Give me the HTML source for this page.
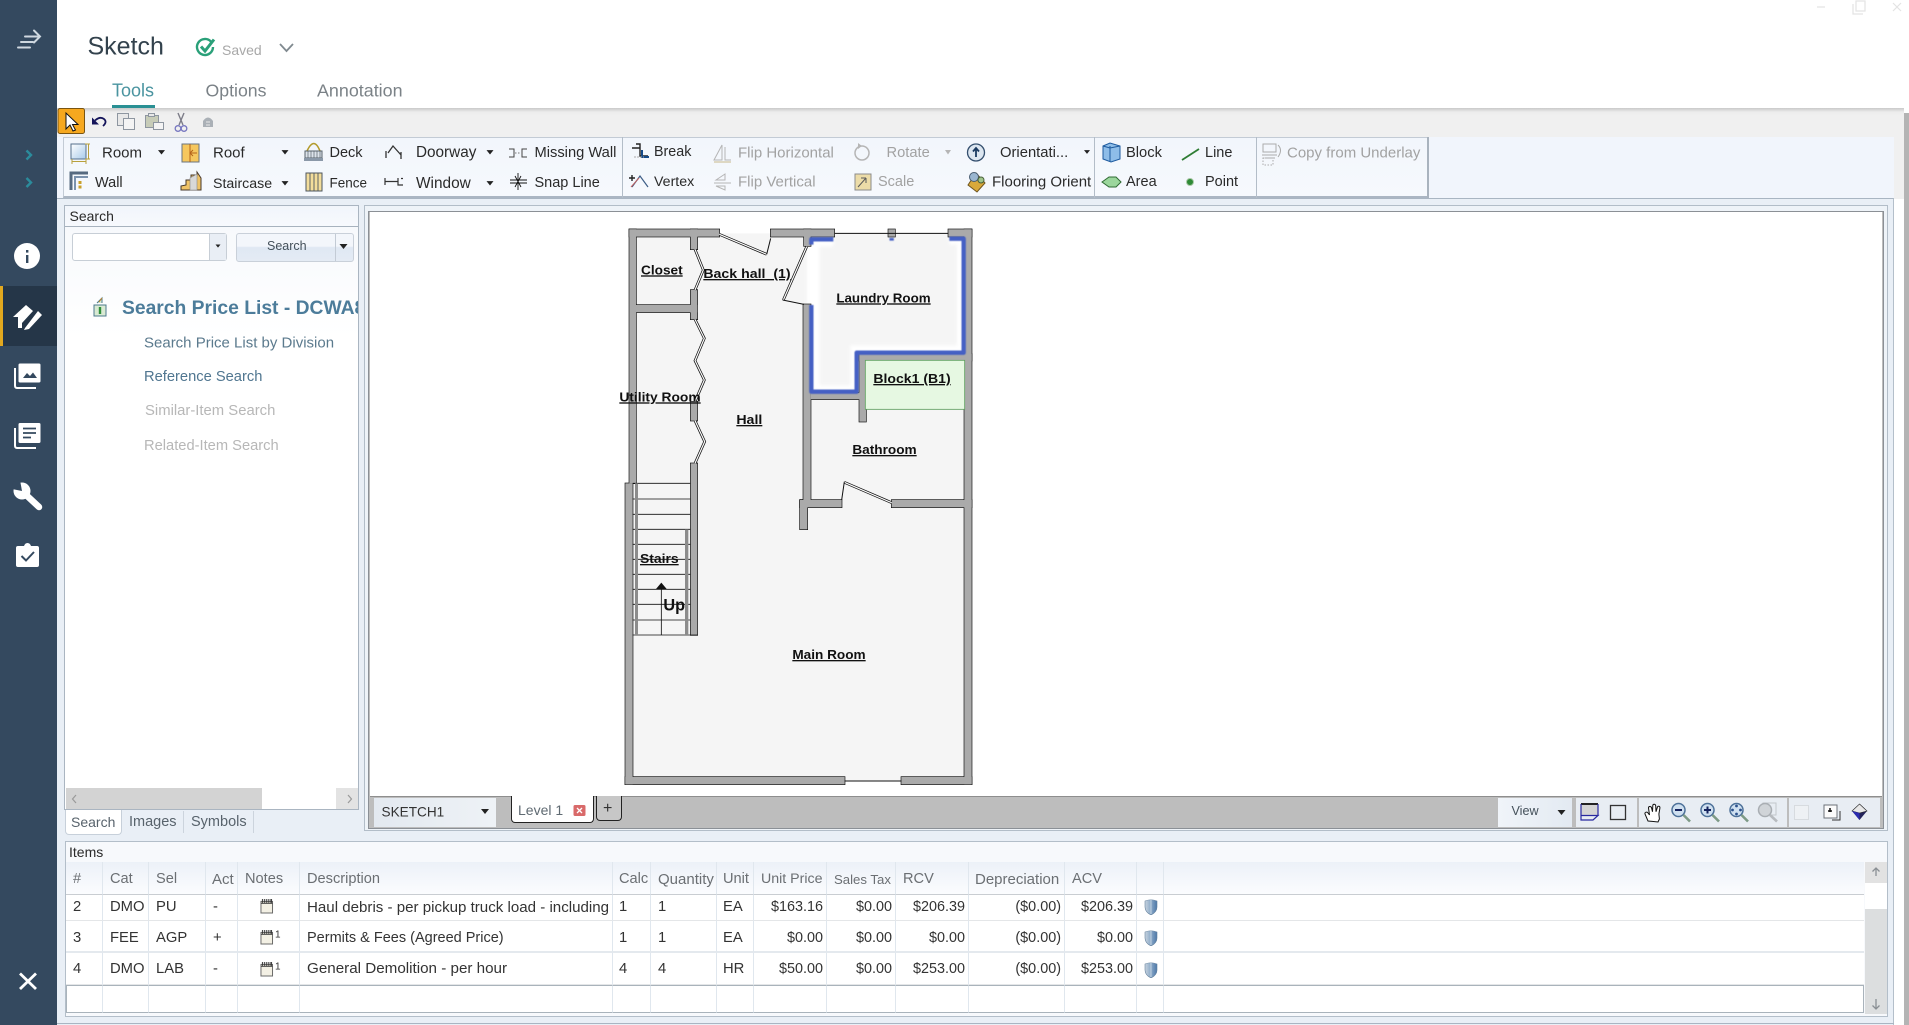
<!DOCTYPE html>
<html lang="en">
<head>
<meta charset="utf-8">
<title>Sketch</title>
<style>
html,body{margin:0;padding:0;background:#fff;}
body{position:relative;width:1909px;height:1025px;overflow:hidden;font-family:"Liberation Sans",sans-serif;color:#2b2b2b;}
.b{position:absolute;box-sizing:border-box;}
.t{position:absolute;white-space:nowrap;transform:translateY(-50%);font-size:14.5px;color:#2a2a2a;}
.g{color:#a2a2a2;}
svg{position:absolute;left:0;top:0;}
table{position:absolute;left:66px;top:862px;width:1798px;table-layout:fixed;border-collapse:separate;border-spacing:0;font-size:14.8px;color:#333;}
td,th{box-sizing:border-box;padding:0 3px 0 7px;font-weight:normal;text-align:left;white-space:nowrap;overflow:hidden;border-right:1px solid #e0e7ee;border-bottom:1px solid #e4e6e8;}
th{color:#6b6f73;background:linear-gradient(#ecf1f8,#fbfcfe);border-bottom:1px solid #c9cdd2;height:33px;font-size:14.6px;padding-top:2px;}
td.r{text-align:right;font-size:14.4px;}
tr.a td{height:26px;padding-bottom:1px;}
tr.c td{height:32px;border-bottom:2px solid #e4e9ee;padding-top:3px;}
tr.d td{height:32px;}
tr.e td{height:28px;border-top:1px solid #a9b3bb;border-bottom:1px solid #a9b3bb;}
th:last-child,td:last-child{border-right:0;}
</style>
</head>
<body>

<!-- main backgrounds -->
<div class="b" style="left:57px;top:0;width:1852px;height:108px;background:#fff;"></div>
<div class="b" style="left:57px;top:108px;width:1847px;height:29px;background:linear-gradient(#c9c9c9 0,#ececec 4px,#f0f0f0 8px);"></div>
<div class="b" style="left:1904px;top:113px;width:5px;height:912px;background:#b4b4b4;"></div>
<div class="b" style="left:57px;top:137px;width:1837px;height:62px;background:#f1f5fc;"></div>
<div class="b" style="left:57px;top:198px;width:1837px;height:827px;background:#e9eff6;border-top:1px solid #a9b5c2;border-right:1px solid #b4bfca;"></div>
<div class="b" style="left:1894px;top:137px;width:10px;height:888px;background:#fff;"></div>
<div class="b" style="left:1894px;top:137px;width:10px;height:62px;background:#f0f0f0;"></div>

<!-- ribbon -->
<div class="b" style="left:63px;top:137px;width:1365px;height:61px;background:linear-gradient(#f2f6fc,#f6f9fd);border:1px solid #c3cbd5;border-bottom:2px solid #abb6c3;"></div>
<div class="b" style="left:622px;top:137px;width:1px;height:61px;background:#b3bdc8;"></div>
<div class="b" style="left:1094px;top:137px;width:1px;height:61px;background:#b3bdc8;"></div>
<div class="b" style="left:1256px;top:137px;width:1px;height:61px;background:#b3bdc8;"></div>
<div class="b" style="left:1427px;top:137px;width:2px;height:61px;background:#a9b3be;"></div>

<!-- sidebar -->
<div class="b" style="left:0;top:0;width:57px;height:1025px;background:#34495f;"></div>
<div class="b" style="left:0;top:286px;width:57px;height:60px;background:#253648;border-left:3px solid #e2a81f;"></div>

<!-- header text -->
<span class="t" style="left:87.500px;top:47px;font-size:25px;color:#33424d;">Sketch</span>
<span class="t" style="left:222px;top:50px;font-size:14px;color:#a8a8a8;">Saved</span>
<span class="t" style="left:112px;top:91px;font-size:18px;color:#4a94a0;">Tools</span>
<span class="t" style="left:205.500px;top:91px;font-size:17.700px;color:#7b8287;">Options</span>
<span class="t" style="left:317px;top:91px;font-size:17.900px;color:#7b8287;">Annotation</span>
<div class="b" style="left:112px;top:105px;width:43px;height:3px;background:#2a9094;"></div>

<!-- ribbon text -->
<span class="t" style="left:102px;top:153px;font-size:15px;">Room</span>
<span class="t" style="left:213px;top:153px;font-size:15px;">Roof</span>
<span class="t" style="left:329.500px;top:153px;font-size:14.500px;">Deck</span>
<span class="t" style="left:416px;top:153px;font-size:15.300px;">Doorway</span>
<span class="t" style="left:534.500px;top:153px;font-size:14.700px;">Missing Wall</span>
<span class="t" style="left:654px;top:152px;font-size:14.300px;">Break</span>
<span class="t g" style="left:738px;top:153px;font-size:15px;">Flip Horizontal</span>
<span class="t g" style="left:886.500px;top:153px;font-size:14.700px;">Rotate</span>
<span class="t" style="left:1000px;top:153px;font-size:14.800px;">Orientati...</span>
<span class="t" style="left:1126px;top:153px;font-size:14.700px;">Block</span>
<span class="t" style="left:1205px;top:153px;font-size:14.500px;">Line</span>
<span class="t g" style="left:1287px;top:153px;font-size:15px;">Copy from Underlay</span>
<span class="t" style="left:95px;top:183px;font-size:14.500px;">Wall</span>
<span class="t" style="left:213px;top:184px;font-size:14.200px;">Staircase</span>
<span class="t" style="left:329.500px;top:183px;font-size:13.500px;">Fence</span>
<span class="t" style="left:416px;top:184px;font-size:15.400px;">Window</span>
<span class="t" style="left:534.500px;top:183px;font-size:14.500px;">Snap Line</span>
<span class="t" style="left:654px;top:182px;font-size:14.200px;">Vertex</span>
<span class="t g" style="left:738px;top:182px;font-size:15px;">Flip Vertical</span>
<span class="t g" style="left:878px;top:182px;font-size:14.500px;">Scale</span>
<div class="b" style="left:992px;top:172px;width:100px;height:20px;overflow:hidden;"><span class="t" style="left:0;top:10px;font-size:15px;">Flooring Orientation</span></div>
<span class="t" style="left:1126px;top:182px;font-size:14.500px;">Area</span>
<span class="t" style="left:1205px;top:182px;font-size:14.500px;">Point</span>

<!-- search panel -->
<div class="b" style="left:64px;top:205px;width:295px;height:605px;background:#fff;border:1px solid #aab5c1;overflow:hidden;">
  <div class="b" style="left:0;top:0;width:293px;height:21px;background:linear-gradient(#f1f5fb,#f7f9fd);border-bottom:1px solid #a7b2be;"></div>
  <div class="b" style="left:0;top:21px;width:293px;height:110px;background:linear-gradient(#f7f9fc,#fff);"></div>
  <span class="t" style="left:4.500px;top:10px;font-size:14px;">Search</span>
  <span class="t" style="left:57px;top:102.500px;font-size:19.300px;font-weight:bold;color:#4c7c9a;">Search Price List - DCWA8</span>
  <span class="t" style="left:79px;top:136.500px;font-size:15px;color:#5b7a8d;">Search Price List by Division</span>
  <span class="t" style="left:79px;top:171px;font-size:14.700px;color:#507690;">Reference Search</span>
  <span class="t" style="left:80px;top:205px;font-size:14.850px;color:#b7b7b7;">Similar-Item Search</span>
  <span class="t" style="left:79px;top:240px;font-size:14.700px;color:#b7b7b7;">Related-Item Search</span>
  <div class="b" style="left:1px;top:582px;width:196px;height:21px;background:#d3d3d3;"></div>
  <div class="b" style="left:271px;top:582px;width:22px;height:21px;background:#e3e3e3;"></div>
</div>
<div class="b" style="left:71.500px;top:233px;width:155px;height:28px;background:#fff;border:1px solid #c7ced6;border-radius:3px;"></div>
<div class="b" style="left:209px;top:234px;width:17px;height:26px;background:#e9eef5;border-left:1px solid #c7ced6;"></div>
<div class="b" style="left:236px;top:233px;width:118px;height:29px;background:linear-gradient(#f3f6fb 0,#f3f6fb 45%,#dfe8f3 50%,#e4ebf4 100%);border:1px solid #c9d0d9;border-radius:3px;"></div>
<div class="b" style="left:335px;top:234px;width:1px;height:27px;background:#c3cbd5;"></div>
<span class="t" style="left:267px;top:246px;font-size:12.500px;color:#44505a;">Search</span>

<!-- search tabs -->
<div class="b" style="left:65px;top:810px;width:57px;height:25px;background:#fff;border:1px solid #c7d0da;border-top:0;border-radius:0 0 4px 4px;"></div>
<div class="b" style="left:183px;top:811px;width:1px;height:22px;background:#ccd4dd;"></div>
<div class="b" style="left:253px;top:811px;width:1px;height:22px;background:#ccd4dd;"></div>
<span class="t" style="left:71px;top:822px;font-size:14px;color:#58636c;">Search</span>
<span class="t" style="left:129px;top:822px;font-size:14.500px;color:#58636c;">Images</span>
<span class="t" style="left:191px;top:822px;font-size:14.500px;color:#58636c;">Symbols</span>

<!-- canvas panel -->
<div class="b" style="left:364px;top:205px;width:1524px;height:626px;background:#eef3f8;border:1px solid #b2bdc8;"></div>
<div class="b" style="left:368px;top:211px;width:1516px;height:618px;background:#bdbdbd;border:1px solid #8b9096;"></div>
<div class="b" style="left:369.500px;top:212px;width:1512px;height:584px;background:#fff;"></div>
<div class="b" style="left:369.500px;top:796px;width:1512px;height:1px;background:#8e8e8e;"></div>

<!-- floor plan -->
<svg style="left:600px;top:210px;" width="420" height="610" viewBox="0 0 1260 1830" font-family="Liberation Sans, sans-serif">
  <defs>
    <filter id="bl"><feGaussianBlur stdDeviation="5"/></filter>
    <filter id="bs" x="-5%" y="-5%" width="110%" height="110%"><feGaussianBlur stdDeviation="1.800"/></filter>
    <g id="w">
      <rect x="88" y="58" width="270" height="22"/>
      <rect x="88" y="58" width="20" height="762"/>
      <rect x="272" y="58" width="20" height="60"/>
      <rect x="272" y="240" width="20" height="88"/>
      <rect x="108" y="285" width="184" height="22"/>
      <rect x="272" y="575" width="20" height="57"/>
      <rect x="272" y="760" width="20" height="515"/>
      <rect x="76" y="820" width="22" height="903"/>
      <rect x="76" y="1701" width="658" height="22"/>
      <rect x="904" y="1701" width="211" height="22"/>
      <rect x="1093" y="58" width="22" height="1665"/>
      <rect x="512" y="58" width="191" height="22"/>
      <rect x="865" y="58" width="20" height="22"/>
      <rect x="1045" y="58" width="70" height="22"/>
      <rect x="612" y="58" width="20" height="50"/>
      <rect x="610" y="283" width="22" height="600"/>
      <rect x="600" y="870" width="22" height="88"/>
      <rect x="600" y="870" width="125" height="22"/>
      <rect x="875" y="870" width="240" height="22"/>
      <rect x="778" y="432" width="337" height="20"/>
      <rect x="778" y="432" width="20" height="203"/>
      <rect x="632" y="548" width="166" height="20"/>
    </g>
  </defs>
  <path d="M98 70H1100V1712H88V820H98Z" fill="#f5f5f5"/>
  <path d="M700 90H640V285V545H770V425H1090V84H1048" fill="none" stroke="#fff" stroke-width="38" filter="url(#bl)"/>
  <path d="M268 118V240M268 328V575M268 632V760" stroke="#fff" stroke-width="14" fill="none" filter="url(#bl)"/>
  <path d="M730 892H875" stroke="#fff" stroke-width="18" fill="none" filter="url(#bl)"/>
  <use href="#w" fill="#111" stroke="#111" stroke-width="4"/>
  <use href="#w" fill="#aaa"/>
  <path d="M703 70H1045M734 1713H904" stroke="#111" stroke-width="3"/>
  <!-- green block -->
  <rect x="796" y="451" width="298" height="147" fill="#e6f8e2" stroke="#5f9f5f" stroke-width="2.500"/>
  <!-- blue highlight -->
  <path d="M634 104V88H700M634 285V545H770V428H1091V86H1048M875 84V92" fill="none" stroke="#4460c4" stroke-width="13" stroke-linejoin="round" filter="url(#bs)"/>
  <!-- doors -->
  <g fill="none" stroke="#111" stroke-width="8">
    <path d="M358 73L500 133M620 110L550 270M875 878L733 817"/>
    <path d="M285 118L310 180L285 240M285 328L313 385L285 452L313 510L285 575M285 632L314 695L285 760"/>
  </g>
  <g fill="none" stroke="#fff" stroke-width="3.500">
    <path d="M358 73L500 133M620 110L550 270M875 878L733 817"/>
    <path d="M285 118L310 180L285 240M285 328L313 385L285 452L313 510L285 575M285 632L314 695L285 760"/>
  </g>
  <path d="M500 133L512 85M548 270L612 283M733 815L725 870" fill="none" stroke="#111" stroke-width="3"/>
  <!-- stairs -->
  <g stroke="#111" stroke-width="2.500">
    <path d="M98 820H272M98 867H272M98 913H272M98 958H272M98 1003H272M98 1048H272M98 1093H272M98 1138H272M98 1183H272M98 1230H272M98 1275H292"/>
    <path d="M184 1135V1275"/>
  </g>
  <rect x="105" y="820" width="9" height="455" fill="#8c8c8c"/>
  <rect x="255" y="958" width="10" height="317" fill="#8c8c8c"/>
  <path d="M184 1118L201 1138H167Z" fill="#111"/>
  <!-- labels -->
  <g font-weight="bold" font-size="40" fill="#111" text-decoration="underline">
    <text x="123" y="193" textLength="125" lengthAdjust="spacingAndGlyphs">Closet</text>
    <text x="310" y="204" textLength="262" lengthAdjust="spacingAndGlyphs" xml:space="preserve">Back hall  (1)</text>
    <text x="709" y="277" textLength="283" lengthAdjust="spacingAndGlyphs">Laundry Room</text>
    <text x="58" y="574" textLength="244" lengthAdjust="spacingAndGlyphs">Utility Room</text>
    <text x="409" y="642" textLength="78" lengthAdjust="spacingAndGlyphs">Hall</text>
    <text x="757" y="732" textLength="193" lengthAdjust="spacingAndGlyphs">Bathroom</text>
    <text x="820" y="519" textLength="232" lengthAdjust="spacingAndGlyphs">Block1 (B1)</text>
    <text x="120" y="1059" textLength="116" lengthAdjust="spacingAndGlyphs">Stairs</text>
    <text x="577" y="1347" textLength="220" lengthAdjust="spacingAndGlyphs">Main Room</text>
  </g>
  <text x="190" y="1201" font-size="50" font-weight="bold" fill="#111" textLength="65" lengthAdjust="spacingAndGlyphs">Up</text>
</svg>

<!-- status bar -->
<div class="b" style="left:373.500px;top:798px;width:122.500px;height:29px;background:linear-gradient(90deg,#e3e9f0,#eef2f6);"></div>
<span class="t" style="left:381.500px;top:812px;font-size:13.600px;color:#333;">SKETCH1</span>
<div class="b" style="left:511px;top:796px;width:83px;height:27px;background:#fff;border:1px solid #222;border-top:0;border-radius:0 0 4px 4px;"></div>
<span class="t" style="left:518px;top:810px;font-size:14px;color:#5f6a72;">Level 1</span>
<div class="b" style="left:596px;top:796px;width:26px;height:25px;background:#c7c7c7;border:1px solid #222;border-top:0;border-radius:0 0 4px 4px;"></div>
<span class="t" style="left:603px;top:809px;font-size:16px;color:#333;">+</span>
<div class="b" style="left:1498px;top:798px;width:74px;height:29px;background:linear-gradient(90deg,#f0f4f9,#e3eaf2);"></div>
<span class="t" style="left:1511.500px;top:811px;font-size:12.600px;color:#44505a;">View</span>
<div class="b" style="left:1575.500px;top:798px;width:61px;height:29px;background:#e8edf3;"></div>
<div class="b" style="left:1639px;top:798px;width:148px;height:29px;background:#e8edf3;"></div>
<div class="b" style="left:1789px;top:798px;width:91px;height:29px;background:#e8edf3;"></div>

<!-- items panel -->
<div class="b" style="left:65px;top:841px;width:1823px;height:176px;background:#f7f9fc;border:1px solid #b3bec9;"></div>
<div class="b" style="left:57px;top:1023px;width:1837px;height:1px;background:#a9b5c2;"></div>
<span class="t" style="left:69px;top:851.500px;font-size:14px;">Items</span>
<table>
  <colgroup><col style="width:37px"><col style="width:46px"><col style="width:57px"><col style="width:32px"><col style="width:62px"><col style="width:313px"><col style="width:38px"><col style="width:66px"><col style="width:37px"><col style="width:73px"><col style="width:69px"><col style="width:73px"><col style="width:96px"><col style="width:72px"><col style="width:27px"><col></colgroup>
  <tr><th>#</th><th>Cat</th><th>Sel</th><th style="padding-left:6px;font-size:15px">Act</th><th>Notes</th><th>Description</th><th style="padding-left:6px">Calc</th><th style="font-size:15px">Quantity</th><th style="padding-left:6px">Unit</th><th style="font-size:14.200px">Unit Price</th><th style="font-size:13.200px">Sales Tax</th><th>RCV</th><th style="font-size:15px;padding-left:6px">Depreciation</th><th>ACV</th><th></th><th></th></tr>
  <tr class="a" style="background:#fff"><td>2</td><td>DMO</td><td>PU</td><td>-</td><td></td><td style="font-size:15.100px">Haul debris - per pickup truck load - including disposal</td><td style="padding-left:6px">1</td><td>1</td><td style="padding-left:6px">EA</td><td class="r">$163.16</td><td class="r">$0.00</td><td class="r">$206.39</td><td class="r">($0.00)</td><td class="r">$206.39</td><td></td><td></td></tr>
  <tr class="c" style="background:#fff"><td>3</td><td>FEE</td><td>AGP</td><td>+</td><td></td><td style="font-size:14.500px">Permits &amp; Fees (Agreed Price)</td><td style="padding-left:6px">1</td><td>1</td><td style="padding-left:6px">EA</td><td class="r">$0.00</td><td class="r">$0.00</td><td class="r">$0.00</td><td class="r">($0.00)</td><td class="r">$0.00</td><td></td><td></td></tr>
  <tr class="d" style="background:#fff"><td>4</td><td>DMO</td><td>LAB</td><td>-</td><td></td><td style="font-size:15.200px">General Demolition - per hour</td><td style="padding-left:6px">4</td><td>4</td><td style="padding-left:6px">HR</td><td class="r">$50.00</td><td class="r">$0.00</td><td class="r">$253.00</td><td class="r">($0.00)</td><td class="r">$253.00</td><td></td><td></td></tr>
  <tr class="e" style="background:#fff"><td style="border-left:1px solid #a9b3bb"></td><td></td><td></td><td></td><td></td><td></td><td></td><td></td><td></td><td></td><td></td><td></td><td></td><td></td><td></td><td style="border-right:1px solid #a9b3bb"></td></tr>
</table>
<div class="b" style="left:1865px;top:862px;width:22px;height:152px;background:#fff;"></div>
<div class="b" style="left:1865px;top:862px;width:22px;height:21px;background:#e2e2e2;"></div>
<div class="b" style="left:1865px;top:909px;width:22px;height:105px;background:#dcdedf;"></div>
<span class="t" style="left:275px;top:935px;font-size:10px;color:#333;">1</span>
<span class="t" style="left:275px;top:967px;font-size:10px;color:#333;">1</span>

<!-- icons overlay -->
<svg width="1909" height="1025" viewBox="0 0 1909 1025" style="pointer-events:none">
  <defs>
    <linearGradient id="gb" x1="0" y1="0" x2="1" y2="1"><stop offset="0" stop-color="#fff"/><stop offset="1" stop-color="#a9cbea"/></linearGradient>
    <linearGradient id="gs" x1="0" y1="0" x2="1" y2="0"><stop offset="0" stop-color="#c7d3de"/><stop offset=".5" stop-color="#8aa9c8"/><stop offset="1" stop-color="#4d77a8"/></linearGradient>
    <symbol id="note" viewBox="0 0 14 15" overflow="visible">
      <rect x="1" y="2.500" width="12" height="12" fill="#f3f0e4" stroke="#666"/>
      <path d="M1 4.500H13" stroke="#444" stroke-width="1"/>
      <path d="M2.500 0V4M4.500 0V4M6.500 0V4M8.500 0V4M10.500 0V4M12 0V4" stroke="#333" stroke-width="1"/>
    </symbol>
    <symbol id="shield" viewBox="0 0 14 16"><path d="M1 2Q7-.5 13 2V8C13 12 10 14.500 7 16 4 14.500 1 12 1 8Z" fill="url(#gs)" stroke="#66829e" stroke-width=".6"/><path d="M7 .8V15" stroke="#e8eef4" stroke-width=".6"/></symbol>
    <symbol id="dn" viewBox="0 0 8 5"><path d="M0 0H8L4 5Z" fill="#222"/></symbol>
  </defs>

  <!-- window controls -->
  <g stroke="#e3e3e3" stroke-width="1.200" fill="none">
    <path d="M1817 7H1825"/><rect x="1856" y="1" width="9" height="10"/><path d="M1853 4V14H1863"/><path d="M1893 3L1901 11M1901 3L1893 11"/>
  </g>

  <!-- sidebar icons -->
  <g stroke="#cfd8e0" stroke-width="2" fill="none" stroke-linecap="round">
    <path d="M25 36.500H40M34 30.500L40 36.500L34 42.500M21 42H33M18 47.500H30"/>
  </g>
  <g stroke="#2b8c9c" stroke-width="2.400" fill="none"><path d="M26.500 150.500L31 155L26.500 159.500M26.500 178L31 182.500L26.500 187"/></g>
  <circle cx="27" cy="256" r="13" fill="#fff"/>
  <rect x="26" y="255" width="2.400" height="8" fill="#34495f"/><rect x="26" y="250" width="2.400" height="2.600" fill="#34495f"/>
  <path d="M13 317L26 305L33 311L22 323V328H18V317Z" fill="#fff"/>
  <path d="M25 328L38 311L42 315L29 329L24 330Z" fill="#fff"/>
  <path d="M24 326L36 311" stroke="#253648" stroke-width="1.500"/>
  <!-- images -->
  <rect x="18.500" y="363.500" width="22" height="19" rx="1.500" fill="#fff"/>
  <path d="M15 368V385.500Q15 388 17 388H36" fill="none" stroke="#fff" stroke-width="2"/>
  <path d="M23 378L27 373L30 376L33 372.500L37 378Z" fill="#34495f"/>
  <!-- book -->
  <rect x="18.500" y="423" width="22" height="20" rx="1.500" fill="#fff"/>
  <path d="M15 428V445.500Q15 448 17 448H36" fill="none" stroke="#fff" stroke-width="2"/>
  <path d="M23 428.500H36M23 433H36M23 437.500H31" stroke="#34495f" stroke-width="1.800"/>
  <!-- wrench -->
  <circle cx="22" cy="491" r="8.500" fill="#fff"/>
  <path d="M24 493L39 507" stroke="#fff" stroke-width="6.500" stroke-linecap="round"/>
  <path d="M22 491L12 489L13 482L20 480Z" fill="#34495f"/>
  <!-- clipboard -->
  <path d="M18 546H24Q25 543 27.500 543T31 546H37Q39 546 39 548V565Q39 567 37 567H18Q16 567 16 565V548Q16 546 18 546Z" fill="#fff"/>
  <path d="M21.500 556L26 560.500L34 552" fill="none" stroke="#34495f" stroke-width="2"/>
  <!-- close -->
  <path d="M20 973.500L36 989M36 973.500L20 989" stroke="#fff" stroke-width="2.800"/>

  <!-- saved check -->
  <path d="M211 41.700A8 8 0 1 0 213 47" fill="none" stroke="#2aa079" stroke-width="2.400"/>
  <path d="M201 46.500L205 51L214 39.500" fill="none" stroke="#2aa079" stroke-width="3"/>
  <path d="M280 44L286.500 51L293 44" fill="none" stroke="#808a90" stroke-width="1.800"/>

  <!-- quick toolbar -->
  <rect x="58" y="108.500" width="26.500" height="25" rx="2" fill="#f6a81f" stroke="#7a5410"/>
  <path d="M66 113V129L70 125L73 131L75.500 130L72.500 124.500H78Z" fill="#fff" stroke="#111"/>
  <path d="M92 117.500V124.500H99Z" fill="#14145a"/>
  <path d="M95 120.500Q100 116 104 119Q107.500 122 103 126" fill="none" stroke="#14145a" stroke-width="1.800"/>
  <g fill="#e8e8e8" stroke="#8e96a0">
    <rect x="117.500" y="113.500" width="11" height="12"/><rect x="123.500" y="118.500" width="11" height="11" fill="#f4f4f4"/>
    <rect x="145.500" y="115.500" width="13" height="12" fill="#c7ccb8"/><rect x="148.500" y="113.500" width="6" height="3"/><rect x="153.500" y="122.500" width="10" height="7" fill="#f4f4f4"/>
  </g>
  <path d="M178 113L183 125M184 113L179 125" stroke="#7d7d88" stroke-width="1.400"/>
  <circle cx="178" cy="128.500" r="2.800" fill="none" stroke="#7777c0" stroke-width="1.300"/><circle cx="184" cy="128.500" r="2.800" fill="none" stroke="#7777c0" stroke-width="1.300"/>
  <path d="M203 127V121Q208 114 213 121V127Z" fill="#aab0b6"/><path d="M206 122H210M206 125H210" stroke="#e8e8e8"/>

  <!-- ribbon row 1 -->
  <rect x="71" y="144" width="15" height="15" fill="url(#gb)" stroke="#56708c"/>
  <path d="M88.500 144V159M85 144H90M85 159H90M72 161.500H86M72 159V164M86 159V164" stroke="#b9a13c" fill="none"/>
  <rect x="182" y="144" width="17" height="18" fill="#f6c75e" stroke="#6a7480"/><path d="M190 144V162M197 153H190M193 150L190 153L193 156" stroke="#b5631a" fill="none"/>
  <path d="M307 151Q314 136 320 151" fill="none" stroke="#b39b2d" stroke-width="1.500"/>
  <rect x="305" y="151" width="17" height="7" fill="#dce3ea" stroke="#58636c"/><path d="M308 151V158M311 151V158M314 151V158M317 151V158M320 151V158" stroke="#58636c" stroke-width=".7"/><rect x="304" y="158" width="19" height="3" fill="#8a98a8"/>
  <path d="M386 151V158M388 153L393 146L401 155M401 152V159" fill="none" stroke="#333" stroke-width="1.300"/>
  <path d="M509 149H514V157H509M527 149H522V157H527" fill="none" stroke="#444" stroke-width="1"/><path d="M515 153H521" stroke="#777" stroke-dasharray="1.500 1.500"/>
  <path d="M636 144H640V156H648M632 148H640" stroke="#222" fill="none" stroke-width="1.400"/><path d="M642 150V157H649" fill="none" stroke="#154a88" stroke-width="2"/><path d="M634 157H644" stroke="#aaa" stroke-dasharray="2 1"/>
  <g fill="none" stroke="#b5b5b5"><path d="M722 145V160H714ZM725 147V160H731" /><path d="M714 162H731" stroke="#c9b98a"/></g>
  <circle cx="862" cy="153" r="7" fill="none" stroke="#b5b5b5" stroke-width="1.500"/><path d="M858 143L862 146L858 149" fill="#b5b5b5"/>
  <circle cx="976" cy="152.500" r="8.500" fill="#dce6f0" stroke="#344f6e" stroke-width="1.300"/><path d="M976 157V149M973 151.500L976 148L979 151.500" stroke="#1a3a60" stroke-width="1.800" fill="none"/>
  <path d="M1103 146L1110 143L1120 146V159L1111 162L1103 159Z" fill="#8ebde8" stroke="#1d5a9e"/><path d="M1110 146V162M1103 146L1110 148L1120 146" stroke="#1d5a9e" fill="none"/>
  <path d="M1182 160L1199 149" stroke="#2f7d34" stroke-width="1.800"/>
  <g fill="none" stroke="#ababab"><rect x="1263" y="144" width="13" height="8"/><path d="M1262 155H1277M1265 158H1275" /><rect x="1263" y="158" width="10" height="7" stroke-dasharray="1.500 1.500"/><path d="M1278 145Q1283 150 1278 157"/></g>

  <!-- ribbon row 2 -->
  <path d="M71 190V173H88" fill="none" stroke="#566a80" stroke-width="3"/><path d="M75 190V177H88" fill="none" stroke="#7b92ad" stroke-width="2"/>
  <path d="M80 181V190" stroke="#c9a02a" stroke-width="3" stroke-dasharray="3 1.500"/>
  <path d="M181 186L186 185V180H191V175H197V172L201 178V190H181Z" fill="#efc368" stroke="#46372a"/><path d="M190 178L197 174V190H190Z" fill="#d8d8d8" stroke="#888" stroke-width=".6"/>
  <rect x="306" y="173" width="16" height="18" fill="#f3dd9b" stroke="#4d5660"/><path d="M310 173V191M314 173V191M318 173V191" stroke="#4d5660" stroke-width=".9"/>
  <path d="M385 178V185M385 181.500H398M401 178.500H403M398 178V185H403" fill="none" stroke="#333" stroke-width="1.200"/>
  <path d="M518 173V190M510 180H527M510 183H527M515 176L521 187M521 176L515 187" stroke="#111" fill="none" stroke-width=".9"/>
  <path d="M632 187L640 176L648 187" fill="none" stroke="#3d5d86" stroke-width="1.200"/><path d="M629 178H635M632 175V181" stroke="#222" stroke-width="1.400"/><path d="M631 187L639 178" stroke="#c06060"/>
  <g fill="none" stroke="#b5b5b5"><path d="M716 180L725 174V180ZM714 183H731M716 186L725 190V186Z"/></g>
  <rect x="855" y="174" width="16" height="16" fill="#ecdca8" stroke="#8b8b8b"/><path d="M858 187L866 178M866 178H861M866 178V183" stroke="#5a5a5a" fill="none"/>
  <path d="M968 185L976 173L985 183L977 192Z" fill="#d9a93a" stroke="#6d5420"/><circle cx="974" cy="177" r="4.500" fill="#9ab6d0" stroke="#485c70"/><circle cx="981" cy="180" r="3" fill="#9fc48a" stroke="#48603a"/>
  <path d="M1102 182L1109 177H1116L1121 182L1116 187H1109Z" fill="#9bd69c" stroke="#2f6b33"/>
  <circle cx="1190" cy="182" r="3.500" fill="#2f8a36" stroke="#aac8a8"/>

  <!-- ribbon arrows -->
  <use href="#dn" x="158" y="150" width="7" height="4.500"/>
  <use href="#dn" x="281.500" y="150" width="7" height="4.500"/>
  <use href="#dn" x="281.500" y="181" width="7" height="4.500"/>
  <use href="#dn" x="486.500" y="150" width="7" height="4.500"/>
  <use href="#dn" x="486.500" y="181" width="7" height="4.500"/>
  <path d="M945 150H951L948 154.500Z" fill="#b5b5b5"/>
  <use href="#dn" x="1084" y="150" width="6" height="4"/>

  <!-- search panel bits -->
  <use href="#dn" x="215.500" y="244" width="5" height="4"/>
  <use href="#dn" x="339.500" y="244" width="8" height="5"/>
  <path d="M97 303L102 298V303M94 305H106V316H94Z" fill="#d9ead3" stroke="#4d7a8c"/><path d="M100 307V314" stroke="#2f8f3a" stroke-width="2.400"/><path d="M102 298L99 302" stroke="#c7892a"/>
  <path d="M76 795L72.500 799L76 803M348 795L351.500 799L348 803" fill="none" stroke="#9a9a9a" stroke-width="1.200"/>

  <!-- status icons -->
  <use href="#dn" x="481" y="809" width="8" height="5"/>
  <rect x="573.500" y="805" width="12" height="11" rx="1.500" fill="#d96a6a"/><path d="M577 808L582 813M582 808L577 813" stroke="#fff" stroke-width="1.300"/>
  <use href="#dn" x="1557.500" y="810" width="8" height="5"/>
  <rect x="1581" y="804" width="17" height="12" fill="#d4d4d4"/><path d="M1581 804H1598" stroke="#222" stroke-width="2"/><path d="M1581 804V820H1593L1598 815.500H1581M1598 804V816" fill="none" stroke="#2828a0" stroke-width="1.200"/>
  <rect x="1610.500" y="805.500" width="15" height="14" fill="none" stroke="#333" stroke-width="1.300"/>
  <path d="M1648 821L1645 814C1644.500 812 1647 811.500 1648 813L1649.500 815L1648.500 808C1648.500 806 1651 806 1651.500 807.700L1652.500 811.700L1652.800 805.700C1652.800 803.700 1655.400 803.700 1655.700 805.700L1656 811.700L1657.400 807.200C1657.900 805.500 1660.200 806.200 1659.900 808L1658.900 814L1659.400 819L1658 822Z" fill="#fff" stroke="#111" stroke-width="1"/>
  <g>
    <g fill="#cfe0f0" stroke="#4d7199" stroke-width="1.500"><circle cx="1678.500" cy="810" r="6.500"/><circle cx="1707.500" cy="810" r="6.500"/><circle cx="1736.500" cy="810" r="6.500"/></g>
    <path d="M1683.500 815L1690 821.500M1712.500 815L1719 821.500M1741.500 815L1748 821.500" stroke="#7d9a86" stroke-width="2.600"/>
    <path d="M1675 810H1682M1704 810H1711M1707.500 806.500V813.500" stroke="#15235e" stroke-width="2"/>
    <g fill="#2d528d"><circle cx="1736.500" cy="806" r="1.400"/><circle cx="1736.500" cy="814" r="1.400"/><circle cx="1732.500" cy="810" r="1.400"/><circle cx="1740.500" cy="810" r="1.400"/></g>
    <rect x="1763" y="803" width="13" height="12" fill="none" stroke="#c2c6cb"/>
    <circle cx="1765" cy="810" r="6.500" fill="#d0d4d8" stroke="#a9aeb3" stroke-width="1.500"/><path d="M1770 815L1777 821.500" stroke="#b7bbbf" stroke-width="2.600"/>
  </g>
  <rect x="1794.500" y="805.500" width="14" height="14" fill="#eef1f4" stroke="#d7dbdf"/>
  <rect x="1824" y="805" width="13" height="13" fill="#fbfbfb" stroke="#6d7278"/><path d="M1840 811V820H1832" fill="none" stroke="#333"/><path d="M1830 812L1830 808M1828 811H1832" stroke="#111" stroke-width="1.500"/>
  <path d="M1859.500 804L1867 811L1859.500 820L1852 811Z" fill="#23235a"/><path d="M1859.500 804L1867 811L1859.500 813L1852 811Z" fill="#e8e8e8" stroke="#222" stroke-width=".6"/><path d="M1852 811L1859.500 813V820Z" fill="#2b2bb0"/>

  <!-- note icons -->
  <use href="#note" x="260" y="899" width="13.500" height="14.500"/>
  <use href="#note" x="260" y="930" width="13.500" height="14.500"/>
  <use href="#note" x="260" y="962" width="13.500" height="14.500"/>
  <!-- shields -->
  <use href="#shield" x="1144" y="899" width="14" height="16"/>
  <use href="#shield" x="1144" y="930" width="14" height="16"/>
  <use href="#shield" x="1144" y="962" width="14" height="16"/>
  <!-- scroll arrows -->
  <path d="M1876 876V868M1872.500 871.500L1876 868L1879.500 871.500M1876 999V1009M1872.500 1005.500L1876 1009L1879.500 1005.500" fill="none" stroke="#8a8f94" stroke-width="1.300"/>
</svg>
</body>
</html>
